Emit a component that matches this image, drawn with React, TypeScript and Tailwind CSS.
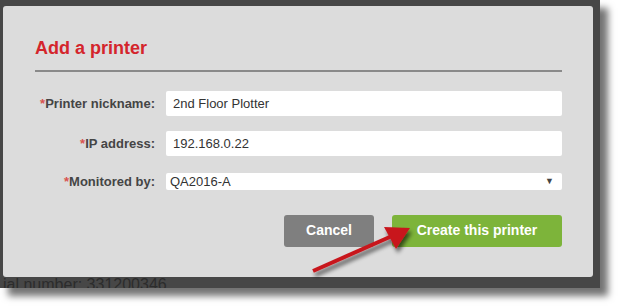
export default function App() {
  return (
    <div className="relative w-[620px] h-[306px] bg-white overflow-hidden font-['Liberation_Sans',Arial,sans-serif]">
      <div className="w-[600px] h-[288px] bg-[#474747] shadow-[8px_8px_7px_rgba(0,0,0,0.55)] flex flex-col pt-[6px] pl-[3px]">
        <div className="w-[590px] h-[271px] shrink-0 bg-[#dcdcdc] rounded-[3px] pt-[30px] pl-[32px] pr-[31px] flex flex-col">
          <div className="h-[24px] text-[18px] leading-[24px] font-bold text-[#d4252c]">Add a printer</div>
          <div className="mt-[10px] h-[2px] bg-[#8a8a8a]" />
          <div className="mt-[19px] flex items-center">
            <div className="w-[120px] text-right text-[13px] font-bold text-[#454545]">
              <span className="text-[#d9534f]">*</span>Printer nickname:
            </div>
            <div className="ml-[11px] w-[396px] h-[25px] bg-white rounded-[2px] px-[7px] flex items-center text-[13px] text-[#333]">2nd Floor Plotter</div>
          </div>
          <div className="mt-[15px] flex items-center">
            <div className="w-[120px] text-right text-[13px] font-bold text-[#454545]">
              <span className="text-[#d9534f]">*</span>IP address:
            </div>
            <div className="ml-[11px] w-[396px] h-[25px] bg-white rounded-[2px] px-[7px] flex items-center text-[13px] text-[#333]">192.168.0.22</div>
          </div>
          <div className="mt-[16px] flex items-center">
            <div className="w-[120px] text-right text-[13px] font-bold text-[#454545]">
              <span className="text-[#d9534f]">*</span>Monitored by:
            </div>
            <div className="ml-[11px] w-[396px] h-[17px] bg-white rounded-[2px] pl-[4px] pr-[8px] flex items-center justify-between text-[13px] text-[#333]">
              <span>QA2016-A</span>
              <span className="text-[9px] text-[#444]">▼</span>
            </div>
          </div>
          <div className="mt-[23px] flex justify-end gap-[18px]">
            <div className="w-[90px] h-[32px] bg-[#7f7f7f] rounded-[3px] flex items-center justify-center text-white font-bold text-[14px]">Cancel</div>
            <div className="w-[170px] h-[32px] bg-[#7db43a] rounded-[3px] flex items-center justify-center text-white font-bold text-[14px]">Create this printer</div>
          </div>
        </div>
        <div className="h-[11px] overflow-hidden text-[16px] leading-[16px] text-[#2c2c2c] whitespace-nowrap">ial number: 331200346</div>
      </div>
      <svg className="absolute left-0 top-0 pointer-events-none" width="620" height="306" viewBox="0 0 620 306">
        <defs>
          <filter id="sh" x="-20%" y="-20%" width="140%" height="160%">
            <feGaussianBlur in="SourceAlpha" stdDeviation="2" />
            <feOffset dx="2" dy="4" result="b" />
            <feComponentTransfer><feFuncA type="linear" slope="0.6" /></feComponentTransfer>
            <feMerge><feMergeNode /><feMergeNode in="SourceGraphic" /></feMerge>
          </filter>
        </defs>
        <g filter="url(#sh)">
          <line x1="313" y1="271" x2="392" y2="236" stroke="#c8161d" strokeWidth="4" />
          <polygon points="410,228 384,227 396,249" fill="#c8161d" />
        </g>
      </svg>
    </div>
  );
}
